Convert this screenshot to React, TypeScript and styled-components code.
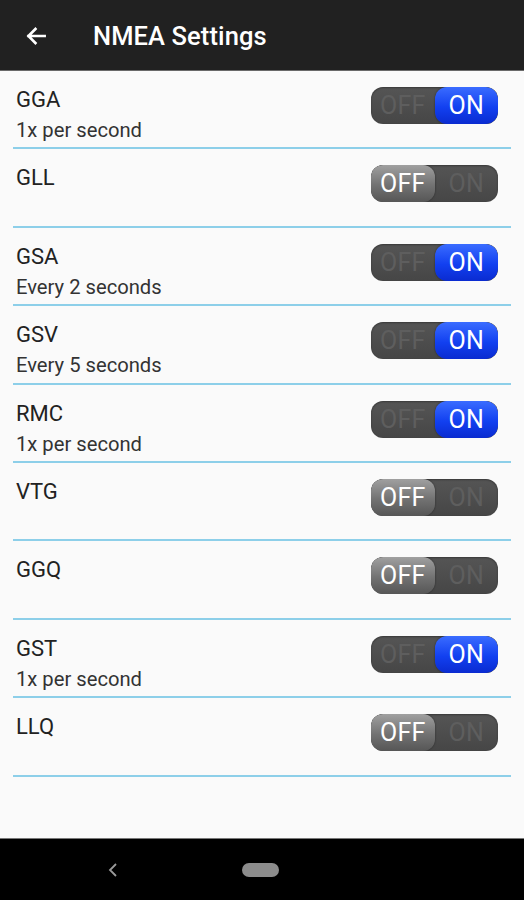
import React from "react";
import styled, { createGlobalStyle } from "styled-components";

const Global = createGlobalStyle`
  html, body { margin: 0; padding: 0; background: #fafafa; }
  body { font-family: Roboto, "Noto Sans", sans-serif; }
  * { box-sizing: border-box; }
`;

const Screen = styled.div`
  width: 524px;
  height: 900px;
  display: flex;
  flex-direction: column;
  background: #fafafa;
  overflow: hidden;
`;

const AppBar = styled.header`
  height: 71px;
  flex: none;
  background: #212121;
  border-bottom: 1px solid #6a6a6a;
  display: flex;
  align-items: center;
  padding-left: 23px;
  gap: 44px;
`;

const BackIcon = styled.svg`
  width: 26px;
  height: 26px;
  flex: none;
  margin-top: 2px;
`;

const Title = styled.h1`
  margin: 0;
  color: #ffffff;
  font-size: 25.5px;
  font-weight: 500;
  letter-spacing: 0.1px;
  margin-top: 2px;
`;

const List = styled.main`
  flex: 1;
  display: flex;
  flex-direction: column;
`;

const Row = styled.div`
  height: 78.4px;
  margin: 0 13px;
  padding: 15px 13px 0 3px;
  border-bottom: 2px solid #8dcfe9;
  display: flex;
  align-items: flex-start;
  justify-content: space-between;
`;

const Texts = styled.div`
  display: flex;
  flex-direction: column;
  gap: 3px;
`;

const Name = styled.div`
  font-size: 22px;
  line-height: 28px;
  color: #222222;
`;

const Sub = styled.div`
  font-size: 20.2px;
  line-height: 26px;
  color: #333333;
`;

const Track = styled.div`
  width: 127px;
  height: 37px;
  margin-top: 1px;
  border-radius: 12px;
  background: linear-gradient(#555555, #464646);
  box-shadow: inset 0 1px 2px rgba(0, 0, 0, 0.35);
  display: grid;
  grid-template-columns: 1fr 1fr;
  overflow: hidden;
`;

const Segment = styled.div<{ $active: boolean; $on: boolean }>`
  display: flex;
  align-items: center;
  justify-content: center;
  font-size: 25px;
  letter-spacing: 0.2px;
  border-radius: 12px;
  color: ${(p) => (p.$active ? "#ffffff" : "#5e5e5e")};
  background: ${(p) =>
    !p.$active
      ? "transparent"
      : p.$on
      ? "linear-gradient(#3a6cff, #1240f0 55%, #0a2bd0)"
      : "linear-gradient(#a0a0a0, #727272 55%, #565656)"};
  box-shadow: ${(p) => (p.$active ? "0 0 2px rgba(0,0,0,0.5)" : "none")};
`;

const NavBar = styled.footer`
  height: 62px;
  flex: none;
  background: #000000;
  border-top: 1px solid #777777;
  display: flex;
  align-items: center;
  padding-left: 107px;
  gap: 123px;
`;

const NavBack = styled.svg`
  width: 12px;
  height: 16px;
`;

const HomePill = styled.div`
  width: 37px;
  height: 14px;
  border-radius: 7px;
  background: #8c8c8c;
`;

type Item = { name: string; sub?: string; on: boolean };

const items: Item[] = [
  { name: "GGA", sub: "1x per second", on: true },
  { name: "GLL", on: false },
  { name: "GSA", sub: "Every 2 seconds", on: true },
  { name: "GSV", sub: "Every 5 seconds", on: true },
  { name: "RMC", sub: "1x per second", on: true },
  { name: "VTG", on: false },
  { name: "GGQ", on: false },
  { name: "GST", sub: "1x per second", on: true },
  { name: "LLQ", on: false },
];

function Toggle({ on }: { on: boolean }) {
  return (
    <Track>
      <Segment $active={!on} $on={false}>OFF</Segment>
      <Segment $active={on} $on={true}>ON</Segment>
    </Track>
  );
}

export default function App() {
  return (
    <Screen>
      <Global />
      <AppBar>
        <BackIcon viewBox="0 0 24 24">
          <path
            d="M20 12H5M11.5 5.5L5 12l6.5 6.5"
            stroke="#fff"
            strokeWidth="2.4"
            fill="none"
            strokeLinecap="square"
          />
        </BackIcon>
        <Title>NMEA Settings</Title>
      </AppBar>
      <List>
        {items.map((it) => (
          <Row key={it.name}>
            <Texts>
              <Name>{it.name}</Name>
              {it.sub && <Sub>{it.sub}</Sub>}
            </Texts>
            <Toggle on={it.on} />
          </Row>
        ))}
      </List>
      <NavBar>
        <NavBack viewBox="0 0 12 16">
          <path d="M9 2L3 8l6 6" stroke="#9a9a9a" strokeWidth="1.8" fill="none" />
        </NavBack>
        <HomePill />
      </NavBar>
    </Screen>
  );
}
